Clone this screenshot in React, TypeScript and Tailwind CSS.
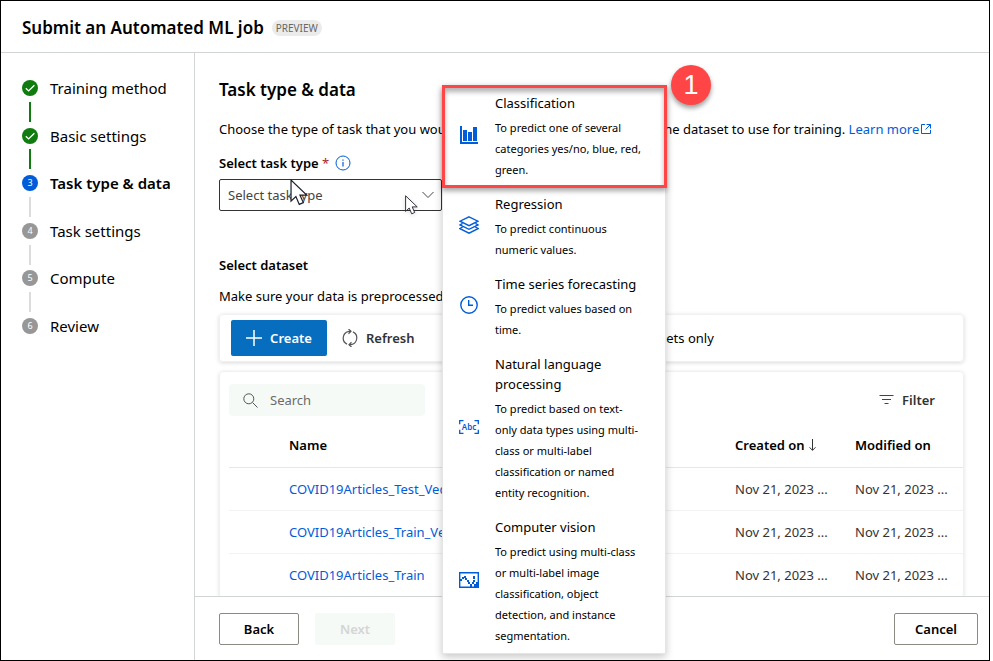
import { Fragment } from "react";
import type { ReactNode } from "react";

const steps = [
  { label: "Training method", state: "done" },
  { label: "Basic settings", state: "done" },
  { label: "Task type & data", state: "current" },
  { label: "Task settings", state: "todo" },
  { label: "Compute", state: "todo" },
  { label: "Review", state: "todo" },
];

const datasets = [
  { name: "COVID19Articles_Test_Vectorized", created: "Nov 21, 2023 ...", modified: "Nov 21, 2023 ..." },
  { name: "COVID19Articles_Train_Vectorized", created: "Nov 21, 2023 ...", modified: "Nov 21, 2023 ..." },
  { name: "COVID19Articles_Train", created: "Nov 21, 2023 ...", modified: "Nov 21, 2023 ..." },
];

function ChartIcon() {
  return (
    <svg width="20" height="18" viewBox="0 0 20 18" fill="#015cda" aria-hidden="true">
      <path d="M1 0h2v16h16v2H1z" />
      <path d="M4 4h4v11H4zM9 6h4v9H9zM14 1h4v14h-4z" />
    </svg>
  );
}

function LayersIcon() {
  return (
    <svg width="20" height="18" viewBox="0 0 20 18" fill="none" stroke="#015cda" strokeWidth="1.4" aria-hidden="true">
      <path d="M10 .8 19 5.2 10 9.6 1 5.2z" />
      <path d="M3.6 7.4 1 8.9l9 4.4 9-4.4-2.6-1.5" />
      <path d="M3.6 11.1 1 12.6l9 4.6 9-4.6-2.6-1.5" />
    </svg>
  );
}

function ClockIcon() {
  return (
    <svg width="20" height="18" viewBox="0 0 20 18" fill="none" stroke="#015cda" strokeWidth="1.4" aria-hidden="true">
      <circle cx="10" cy="9" r="8.2" />
      <path d="M9.7 4v5.3H14" />
    </svg>
  );
}

function TextIcon() {
  return (
    <svg width="20" height="14" viewBox="0 0 20 14" fill="none" stroke="#015cda" strokeWidth="1.3" aria-hidden="true">
      <path d="M4.5.7H.7v3.6M15.5.7h3.8v3.6M4.5 13.3H.7V9.7M15.5 13.3h3.8V9.7" />
      <text x="10" y="10" textAnchor="middle" fontSize="8" fontWeight="600" fontFamily="Noto Sans, sans-serif" fill="#015cda" stroke="none">
        Abc
      </text>
    </svg>
  );
}

function ImageIcon() {
  return (
    <svg width="20" height="16" viewBox="0 0 20 16" fill="#015cda" aria-hidden="true">
      <path fillRule="evenodd" d="M0 0h20v16H0zM1.4 1.4v13.2h17.2V1.4z" />
      <path d="M1 7h2v2H1zM3 5h2v2H3zM5 4h2v2H5zM6 6h2v2H6zM8 8h2v2H8zM9 10h2v2H9zM11 12h2v3h-2zM13 10h2v2h-2zM14 4h2v3h-2zM14 8h2v2h-2zM15 12h4v3h-4zM17 10h2v2h-2z" />
    </svg>
  );
}

const taskTypes: { title: string; description: string; icon: ReactNode }[] = [
  { title: "Classification", description: "To predict one of several categories yes/no, blue, red, green.", icon: <ChartIcon /> },
  { title: "Regression", description: "To predict continuous numeric values.", icon: <LayersIcon /> },
  { title: "Time series forecasting", description: "To predict values based on time.", icon: <ClockIcon /> },
  {
    title: "Natural language processing",
    description: "To predict based on text-only data types using multi-class or multi-label classification or named\nentity recognition.",
    icon: <TextIcon />,
  },
  {
    title: "Computer vision",
    description: "To predict using multi-class or multi-label image classification, object detection, and instance segmentation.",
    icon: <ImageIcon />,
  },
];

function StepMarker({ index, state }: { index: number; state: string }) {
  if (state === "done") {
    return (
      <svg width="16" height="16" viewBox="0 0 16 16" aria-hidden="true">
        <circle cx="8" cy="8" r="8" fill="#107c10" />
        <path d="m3.8 8.2 2.8 2.7 5.8-5.7" fill="none" stroke="#fff" strokeWidth="1.3" />
      </svg>
    );
  }
  const tone = state === "current" ? "bg-[#015cda]" : "bg-[#979797]";
  return (
    <span className={`flex size-4 items-center justify-center rounded-full text-[9px] leading-4 text-white ${tone}`}>{index}</span>
  );
}

function Cursor({ className }: { className: string }) {
  return (
    <svg className={className} viewBox="0 0 13 20" fill="#fff" stroke="#1f1f2b" strokeWidth=".9" aria-hidden="true">
      <path d="M.6.8v15.6l3.6-3.4 2.5 5.8 3-1.3-2.5-5.6h5z" />
    </svg>
  );
}

function Sidebar() {
  return (
    <nav aria-label="Job steps" className="w-[194px] shrink-0 border-r border-[#d2d5d5] pt-[27px] pl-[21px]">
      <ol className="flex h-[254px] flex-col justify-between">
        {steps.map((step, i) => (
          <Fragment key={step.label}>
            <li className="flex h-4 items-center gap-3" aria-current={step.state === "current" ? "step" : undefined}>
              <StepMarker index={i + 1} state={step.state} />
              <span className={`text-[15px] leading-5 ${step.state === "current" ? "font-semibold" : ""}`}>{step.label}</span>
            </li>
            {i < steps.length - 1 && (
              <li aria-hidden="true" className={`ml-[7px] h-5 w-0.5 ${step.state === "done" ? "bg-[#107c10]" : "bg-[#dcdcdc]"}`} />
            )}
          </Fragment>
        ))}
      </ol>
    </nav>
  );
}

function DatasetTable() {
  return (
    <section className="mt-[9px] rounded-sm border border-[#eef1f0] pt-3 shadow-[0_1px_4px_rgba(0,0,0,0.12)]">
      <div className="flex items-center justify-between pr-7 pl-[9px]">
        <label className="flex h-8 w-[196px] items-center gap-3 rounded-sm bg-[#f6faf7] px-3.5">
          <svg className="shrink-0" width="15" height="15" viewBox="0 0 15 15" fill="none" stroke="#555" aria-hidden="true">
            <circle cx="5.8" cy="5.8" r="5" />
            <path d="m9.5 9.5 5 5" />
          </svg>
          <input
            type="search"
            aria-label="Search"
            placeholder="Search"
            className="w-full min-w-0 bg-transparent text-[13px] leading-5 outline-none placeholder:text-[#6a6a6a]"
          />
        </label>
        <button type="button" className="flex items-center gap-2 text-[13px] leading-5 font-semibold text-[#333]">
          <svg width="15" height="12" viewBox="0 0 15 12" stroke="#444" strokeWidth="1.2" aria-hidden="true">
            <path d="M.5 1.5h14M3 5.5h9M5.5 9.5h4" />
          </svg>
          Filter
        </button>
      </div>
      <table className="mt-2 ml-[9px] w-[calc(100%-9px)] table-fixed text-left text-[13px] leading-5">
        <thead>
          <tr className="h-[43px] border-b border-[#e4e7e6]">
            <th className="w-[506px] pl-[60px] font-semibold">Name</th>
            <th className="w-[120px] font-semibold">
              <span className="flex items-center gap-1">
                Created on
                <svg width="7" height="12" viewBox="0 0 7 12" fill="none" stroke="#333" aria-hidden="true">
                  <path d="M3.5 0v11.3M.5 8.3l3 3 3-3" />
                </svg>
              </span>
            </th>
            <th className="font-semibold">Modified on</th>
          </tr>
        </thead>
        <tbody>
          {datasets.map((row) => (
            <tr key={row.name} className="h-[43px] border-b border-[#f1f3f2]">
              <td className="pl-[60px]">
                <a href="#dataset" className="text-[#015cda]">
                  {row.name}
                </a>
              </td>
              <td className="text-[#333]">{row.created}</td>
              <td className="text-[#333]">{row.modified}</td>
            </tr>
          ))}
        </tbody>
      </table>
    </section>
  );
}

function TaskForm() {
  return (
    <main className="min-h-0 flex-1 overflow-hidden pt-[25px] pr-[25px] pl-6">
      <h2 className="text-[17px] leading-6 font-semibold">Task type &amp; data</h2>
      <p className="mt-[17px] text-[13px] leading-5 whitespace-nowrap">
        Choose the type of task that you would like to run in your job and select the dataset to use for training.{" "}
        <a href="#learn" className="inline-flex items-center gap-0.5 text-[#015cda]">
          Learn more
          <svg width="10" height="10" viewBox="0 0 10 10" fill="none" stroke="#015cda" aria-hidden="true">
            <path d="M4 .5H.5v9h9V6M5.5.5h4v4M9.5.5l-5 5" />
          </svg>
        </a>
      </p>
      <div className="mt-3.5 flex h-5 items-center gap-1.5">
        <label htmlFor="task-type" className="text-[13px] leading-5 font-semibold">
          Select task type <span className="font-normal text-[#a4262c]">*</span>
        </label>
        <button type="button" aria-label="About task types">
          <svg width="16" height="16" viewBox="0 0 16 16" fill="none" stroke="#015cda" aria-hidden="true">
            <circle cx="8" cy="8" r="7" />
            <path d="M8 7v4.5M8 4.5v1.2" strokeWidth="1.2" />
          </svg>
        </button>
      </div>
      <div className="relative mt-1.5 w-[223px]">
        <select id="task-type" defaultValue="" className="h-8 w-full appearance-none rounded-xs border border-[#333] bg-white px-2 text-[13px] leading-5 text-[#444]">
          <option value="">Select task type</option>
          {taskTypes.map((type) => (
            <option key={type.title}>{type.title}</option>
          ))}
        </select>
        <svg className="pointer-events-none absolute top-3 right-2" width="12" height="8" viewBox="0 0 12 8" fill="none" stroke="#444" aria-hidden="true">
          <path d="m.5 1 5.5 5.5L11.5 1" />
        </svg>
        <Cursor className="pointer-events-none absolute top-0 left-[71px] h-[27px] w-[18px]" />
        <Cursor className="pointer-events-none absolute top-4 left-[186px] h-[20px] w-[13px] drop-shadow-sm" />
      </div>
      <h3 className="mt-11 text-[13px] leading-5 font-semibold">Select dataset</h3>
      <p className="mt-[11px] text-[13px] leading-5 whitespace-nowrap">Make sure your data is preprocessed</p>
      <div className="mt-2 flex h-12 items-center rounded-sm border border-[#eef1f0] pl-[11px] text-[13px] leading-5 shadow-[0_1px_4px_rgba(0,0,0,0.15)]">
        <button type="button" className="flex h-9 w-24 items-center justify-center gap-2 rounded-xs bg-[#076ebf] font-semibold text-white">
          <svg width="16" height="16" viewBox="0 0 16 16" stroke="#fff" strokeWidth="1.5" aria-hidden="true">
            <path d="M8 0v16M0 8h16" />
          </svg>
          Create
        </button>
        <button type="button" className="ml-[15px] flex items-center gap-2 font-semibold text-[#333]">
          <svg width="16" height="18" viewBox="0 0 16 18" fill="none" stroke="#555" strokeWidth="1.2" aria-hidden="true">
            <path d="M5 15.1A6.8 6.8 0 0 1 7 2.3h2M11 2.9a6.8 6.8 0 0 1-2 12.8H7" />
            <path d="m6.5 0 2.5 2.3-2.5 2.4M9.5 18 7 15.7l2.5-2.4" />
          </svg>
          Refresh
        </button>
        <label className="ml-[91px] flex items-center gap-2 whitespace-nowrap">
          <input type="checkbox" className="size-4" />
          Show supported datasets only
        </label>
      </div>
      <DatasetTable />
    </main>
  );
}

function TaskTypeMenu() {
  return (
    <ul className="absolute top-[84px] left-[441px] w-[224px] border border-[#e3e6e5] bg-white shadow-[0_3px_8px_rgba(0,0,0,0.22)]">
      {taskTypes.map((type) => (
        <li key={type.title}>
          <button type="button" className="flex w-full items-center gap-4 py-[7px] pr-[22px] pl-4 text-left">
            <span className="mb-1 w-5 shrink-0">{type.icon}</span>
            <span className="flex flex-col gap-1">
              <span className="text-[13px] leading-5">{type.title}</span>
              <span className="text-[11px] leading-[21px] whitespace-pre-line">{type.description}</span>
            </span>
          </button>
        </li>
      ))}
    </ul>
  );
}

export default function App() {
  return (
    <div className="relative mr-[3px] flex h-screen flex-col overflow-hidden border border-black bg-white font-['Noto_Sans','Open_Sans',sans-serif] text-black">
      <header className="flex h-[52px] shrink-0 items-center gap-2 border-b border-[#d2d5d5] pt-0.5 pl-[21px]">
        <h1 className="text-[17px] leading-6 font-semibold">Submit an Automated ML job</h1>
        <span className="rounded-full bg-[#ebebeb] px-1 text-[10px] leading-4 text-[#666]">PREVIEW</span>
      </header>
      <div className="flex min-h-0 flex-1">
        <Sidebar />
        <div className="flex min-w-0 flex-1 flex-col">
          <TaskForm />
          <footer className="flex h-16 shrink-0 items-center border-t border-[#d2d5d5] pr-[11px] pl-6 text-[13px] leading-5 font-semibold">
            <button type="button" className="h-8 w-20 rounded-xs border border-[#8a8a82]">
              Back
            </button>
            <button type="button" disabled className="ml-4 h-8 w-20 rounded-xs bg-[#f6faf7] text-[#d4d6d5]">
              Next
            </button>
            <button type="button" className="ml-auto h-8 w-[84px] rounded-xs border border-[#8a8a82]">
              Cancel
            </button>
          </footer>
        </div>
      </div>
      <TaskTypeMenu />
      <div className="pointer-events-none absolute top-[84px] left-[441px] h-[103px] w-[225px] border-3 border-[#ff4545] shadow-[0_3px_5px_rgba(0,0,0,0.35),inset_0_4px_5px_rgba(0,0,0,0.3)]" />
      <span className="absolute top-16 left-[670px] flex size-10 items-center justify-center rounded-full bg-[#ff4545] font-['Liberation_Sans',sans-serif] text-[27px] leading-none text-white shadow-[0_3px_5px_rgba(0,0,0,0.4)]">
        1
      </span>
    </div>
  );
}
